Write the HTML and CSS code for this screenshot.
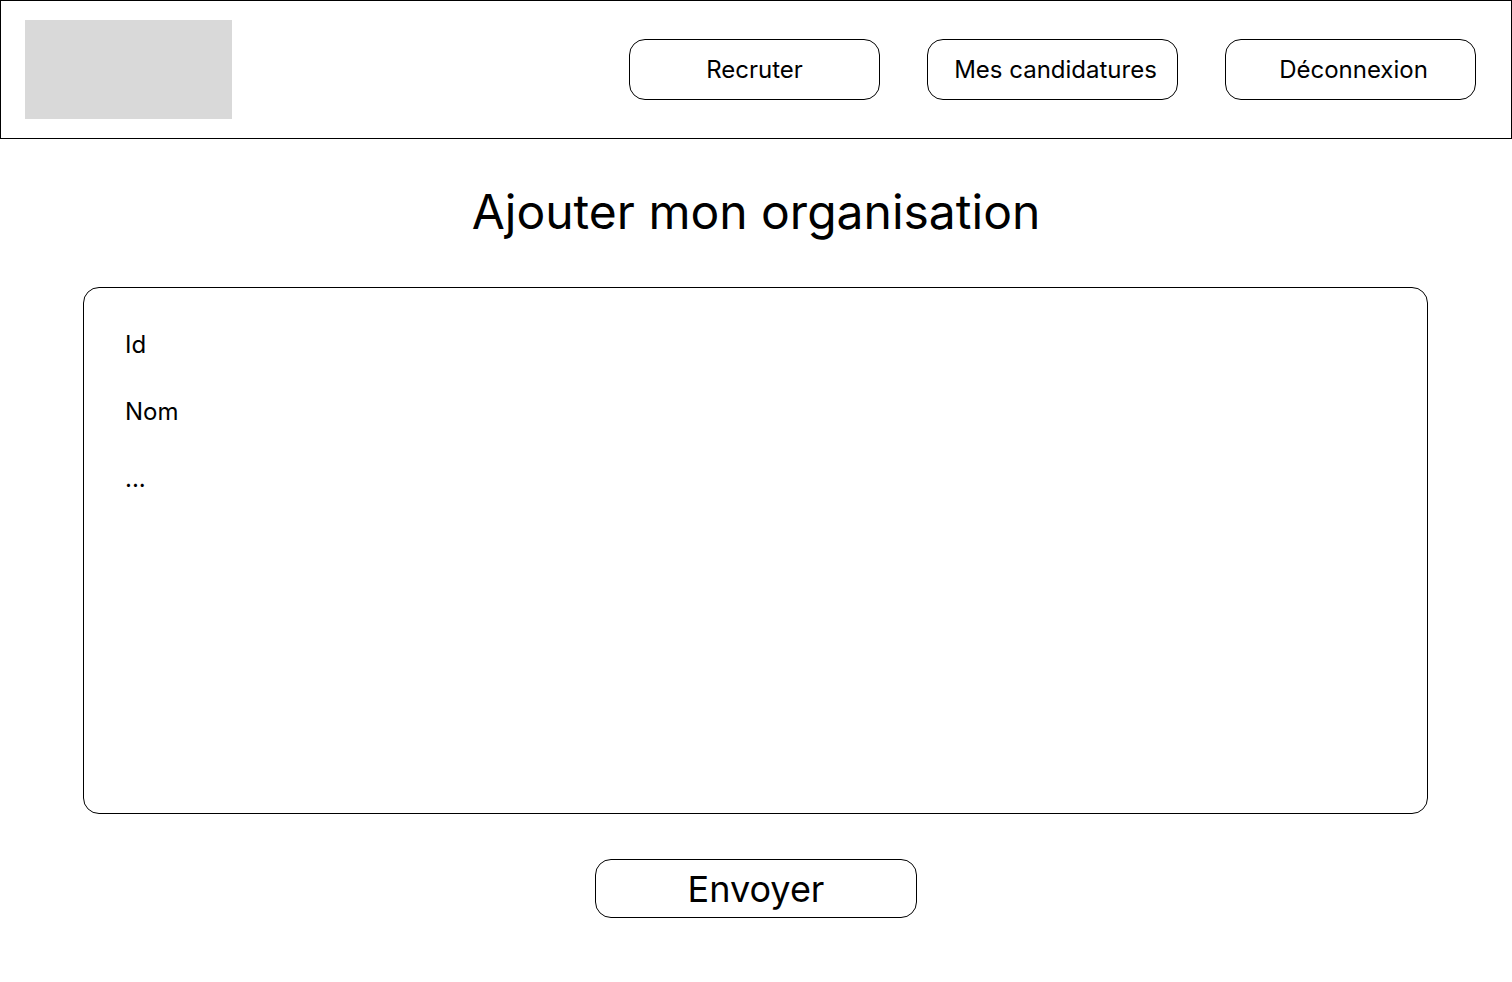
FILE: index.html
```html
<!DOCTYPE html>
<html lang="fr">
<head>
<meta charset="utf-8">
<title>Ajouter mon organisation</title>
<link rel="stylesheet" href="styles.css">
</head>
<body>
<header class="topbar">
  <div class="logo"></div>
  <nav class="nav">
    <a class="nav-btn" href="#">Recruter</a>
    <a class="nav-btn nav-btn--shift" href="#">Mes candidatures</a>
    <a class="nav-btn nav-btn--shift" href="#">Déconnexion</a>
  </nav>
</header>
<main class="content">
  <h1 class="title">Ajouter mon organisation</h1>
  <form class="form-box">
    <div class="field">Id</div>
    <div class="field">Nom</div>
    <div class="field">...</div>
  </form>
  <button class="submit" type="button">Envoyer</button>
</main>
</body>
</html>
```
FILE: styles.css
```css
* { box-sizing: border-box; }
html, body { margin: 0; padding: 0; background: #fff; }
body { font-family: Inter, "Noto Sans", sans-serif; color: #000; }

.topbar {
  height: 139px;
  border: 1px solid #000;
  display: flex;
  align-items: center;
  justify-content: space-between;
  padding: 0 35px 0 24px;
}
.logo {
  width: 207px;
  height: 99px;
  background: #d9d9d9;
  margin-bottom: 1px;
}
.nav { display: flex; gap: 47px; }
.nav-btn {
  width: 251px;
  height: 61px;
  border: 1px solid #000;
  border-radius: 16px;
  display: flex;
  align-items: center;
  justify-content: center;
  font-size: 24px;
  color: #000;
  text-decoration: none;
}
.nav-btn--shift { padding-left: 6px; }

.content {
  display: flex;
  flex-direction: column;
  align-items: center;
}
.title {
  margin: 43px 0 0;
  font-size: 48px;
  font-weight: 400;
  line-height: 60px;
}
.form-box {
  align-self: flex-start;
  margin: 45px 0 0 83px;
  width: 1345px;
  height: 527px;
  border: 1px solid #000;
  border-radius: 16px;
  padding: 42px 41px;
  display: flex;
  flex-direction: column;
  gap: 38px;
}
.field { font-size: 24px; line-height: 29px; }
.submit {
  margin-top: 45px;
  width: 322px;
  height: 59px;
  border: 1px solid #000;
  border-radius: 16px;
  background: #fff;
  font-family: inherit;
  font-size: 36px;
  color: #000;
  padding: 0;
}
```
